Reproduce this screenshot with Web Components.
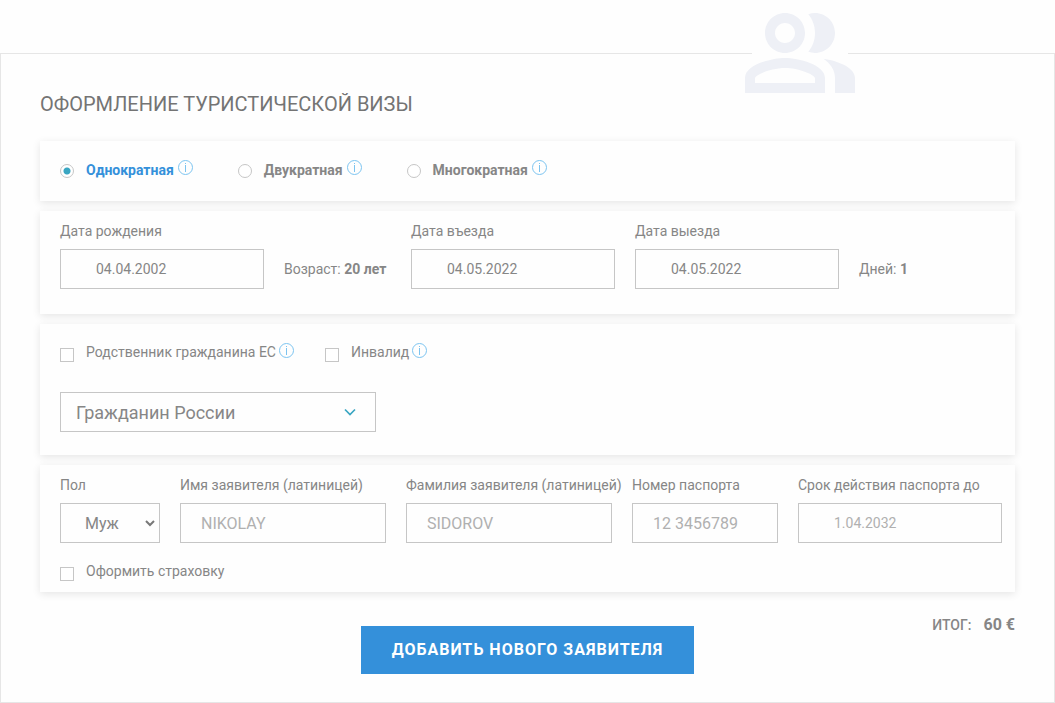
<!DOCTYPE html>
<html lang="ru">
<head>
<meta charset="utf-8">
<title>Оформление туристической визы</title>
<style>
  body {
    margin: 0;
    background: #fefefe;
    color: #868686;
    font: 14px/20px Roboto, "Liberation Sans", sans-serif;
    --line: #c6c6c6;
    --accent: #3490da;
    --teal: #3aa6c2;
    --hint: #b0b0b0;
  }
</style>
</head>
<body>
<visa-panel heading="ОФОРМЛЕНИЕ ТУРИСТИЧЕСКОЙ ВИЗЫ">
  <people-mark slot="mark"></people-mark>
  <form-card class="types"><visa-types></visa-types></form-card>
  <form-card class="dates">
    <field-row>
      <text-field label="Дата рождения" value="04.04.2002" kind="date"></text-field>
      <field-note wide>Возраст: <b>20 лет</b></field-note>
      <text-field label="Дата въезда" value="04.05.2022" kind="date"></text-field>
      <text-field label="Дата выезда" value="04.05.2022" kind="date"></text-field>
      <field-note>Дней: <b>1</b></field-note>
    </field-row>
  </form-card>
  <form-card class="status">
    <check-row>
      <check-field label="Родственник гражданина ЕС" info></check-field>
      <check-field label="Инвалид" info></check-field>
    </check-row>
    <select-field kind="citizen" options="Гражданин России|Гражданин другой страны"></select-field>
  </form-card>
  <form-card class="person">
    <field-row>
      <select-field kind="sex" label="Пол" options="Муж|Жен"></select-field>
      <text-field label="Имя заявителя (латиницей)" placeholder="NIKOLAY"></text-field>
      <text-field label="Фамилия заявителя (латиницей)" placeholder="SIDOROV"></text-field>
      <text-field label="Номер паспорта" placeholder="12 3456789" kind="passport"></text-field>
      <text-field label="Срок действия паспорта до" placeholder="1.04.2032" kind="date"></text-field>
    </field-row>
    <check-row><check-field label="Оформить страховку"></check-field></check-row>
  </form-card>
  <form-footer slot="footer" total="60 €">ДОБАВИТЬ НОВОГО ЗАЯВИТЕЛЯ</form-footer>
</visa-panel>

<script>
class Base extends HTMLElement {
  connectedCallback() {
    if (this.shadowRoot) return;
    this.attachShadow({ mode: "open" }).innerHTML =
      "<style>*{box-sizing:border-box}" + this.css() + "</style>" + this.html();
  }
  attr(name) { return this.getAttribute(name) || ""; }
  css() { return ""; }
  html() { return "<slot></slot>"; }
}

customElements.define("people-mark", class extends Base {
  css() { return `
    :host { display: flex; justify-content: center; width: 96px; background: #fefefe; }
    svg { flex: none; width: 110px; height: 80px; fill: #eef0f6; }`; }
  html() { return `
    <svg viewBox="1 4 22 16" aria-hidden="true">
      <path d="M16.67 13.13C18.04 14.06 19 15.32 19 17v3h4v-3c0-2.18-3.57-3.47-6.33-3.87z"/>
      <path d="M15 12c2.21 0 4-1.79 4-4s-1.79-4-4-4c-.47 0-.91.1-1.33.24C14.5 5.27 15 6.58 15 8s-.5 2.73-1.33 3.76c.42.14.86.24 1.33.24z"/>
      <path d="M9 12c2.21 0 4-1.79 4-4s-1.79-4-4-4-4 1.79-4 4 1.79 4 4 4zm0-6c1.1 0 2 .9 2 2s-.9 2-2 2-2-.9-2-2 .9-2 2-2z"/>
      <path d="M9 13c-2.67 0-8 1.34-8 4v3h16v-3c0-2.66-5.33-4-8-4zm6 5H3v-.99C3.2 16.29 6.3 15 9 15s5.8 1.29 6 2v1z"/>
    </svg>`; }
});

customElements.define("visa-panel", class extends Base {
  css() { return `
    :host { display: block; padding-top: 53px; }
    section { position: relative; border: 1px solid #e6e6e6; padding: 38px 39px 28px; }
    .mark { position: absolute; top: -41px; right: 206px; }
    h1 { margin: 0 0 25px; font-size: 20px; line-height: 24px; font-weight: 400; color: #747474; }
    .cards { display: flex; flex-direction: column; gap: 10px; }`; }
  html() { return `
    <section>
      <div class="mark"><slot name="mark"></slot></div>
      <h1>${this.attr("heading")}</h1>
      <div class="cards"><slot></slot></div>
      <slot name="footer"></slot>
    </section>`; }
});

customElements.define("form-card", class extends Base {
  css() { return `
    :host { display: block; box-sizing: border-box; background: #fefefe;
      box-shadow: 0 2px 8px rgba(0,0,0,.1); }
    :host(.types) { padding: 19px 20px 21px; }
    :host(.dates) { padding: 10px 20px 25px; }
    :host(.status) { padding: 18px 20px 23px; }
    :host(.status) ::slotted(check-row) { margin-bottom: 30px; }
    :host(.person) { padding: 10px 13px 11px 20px; }
    :host(.person) ::slotted(check-row) { margin-top: 18px; }`; }
});

customElements.define("field-row", class extends Base {
  css() { return `:host { display: flex; align-items: flex-end; gap: 20px; }`; }
});

customElements.define("check-row", class extends Base {
  css() { return `:host { display: flex; gap: 31px; }`; }
});

customElements.define("field-note", class extends Base {
  css() { return `
    :host { display: block; line-height: 40px; white-space: nowrap; }
    :host([wide]) { min-width: 107px; }`; }
});

customElements.define("info-tip", class extends Base {
  css() { return `
    :host { display: block; flex: none; }
    svg { display: block; width: 15px; height: 15px; }`; }
  html() { return `
    <svg viewBox="0 0 15 15" role="img" aria-label="Подсказка" fill="none" stroke="#7cc4f0">
      <circle cx="7.5" cy="7.5" r="7"/>
      <path d="M7.5 5v7M7.5 3v1"/>
    </svg>`; }
});

customElements.define("visa-types", class extends Base {
  css() { return `
    :host { display: block; }
    fieldset { display: flex; gap: 45px; margin: 0; padding: 0; border: 0; }
    label { display: flex; height: 20px; font-weight: 700; }
    input { appearance: none; align-self: flex-end; width: 14px; height: 14px; margin: 0 12px 2px 0;
      border: 1px solid var(--line); border-radius: 50%; background: #fff; }
    input:checked { background: radial-gradient(circle, var(--teal) 3px, #fff 4px); }
    input:checked + span { color: var(--accent); }
    span { margin-right: 4px; }`; }
  html() {
    return "<fieldset aria-label='Кратность визы'>" +
      ["Однократная", "Двукратная", "Многократная"].map((t, i) =>
        `<label><input type="radio" name="type" ${i ? "" : "checked"}><span>${t}</span><info-tip></info-tip></label>`
      ).join("") + "</fieldset>";
  }
});

customElements.define("check-field", class extends Base {
  css() { return `
    :host { display: block; }
    label { display: flex; height: 20px; white-space: nowrap; }
    input { appearance: none; align-self: flex-end; width: 14px; height: 14px; margin: 0 12px 0 0;
      border: 1px solid var(--line); background: #fff; }
    input:checked { background: var(--teal); }
    info-tip { margin: 1px 0 0 3px; }`; }
  html() { return `
    <label><input type="checkbox"><span>${this.attr("label")}</span>${this.hasAttribute("info") ? "<info-tip></info-tip>" : ""}</label>`; }
});

customElements.define("text-field", class extends Base {
  css() { return `
    :host { display: block; width: 206px; }
    :host([kind=date]) { width: 204px; }
    :host([kind=passport]) { width: 146px; }
    label { display: block; margin-bottom: 8px; white-space: nowrap; }
    input { display: block; width: 100%; height: 40px; margin: 0; padding: 0 20px;
      border: 1px solid var(--line); border-radius: 0; background: #fefefe; color: inherit;
      font: inherit; font-size: 16px; outline: 0; }
    :host([kind=date]) input { padding: 0 35px; font-size: 14px; }
    input::placeholder { color: var(--hint); opacity: 1; }`; }
  html() { return `
    <label for="f">${this.attr("label")}</label>
    <input id="f" type="text" value="${this.attr("value")}" placeholder="${this.attr("placeholder")}">`; }
});

customElements.define("select-field", class extends Base {
  css() { return `
    :host { display: block; width: 316px; }
    :host([kind=sex]) { width: 100px; }
    label { display: block; margin-bottom: 8px; }
    .box { display: grid; align-items: center; }
    select { grid-area: 1 / 1; appearance: none; width: 100%; height: 40px; margin: 0; padding: 2px 15px 0;
      border: 1px solid var(--line); border-radius: 0; background: #fefefe; color: inherit;
      font: inherit; font-size: 18px; outline: 0; }
    svg { grid-area: 1 / 1; justify-self: end; width: 12px; height: 8px; margin-right: 20px;
      pointer-events: none; fill: none; stroke: var(--teal); stroke-width: 1.7; }
    :host([kind=sex]) select { padding: 2px 24px 0; font-size: 16px; }
    :host([kind=sex]) svg { width: 10px; margin-right: 5px; stroke: #787878; stroke-width: 2; }`; }
  html() {
    const sex = this.attr("kind") === "sex";
    return (sex ? `<label for="s">${this.attr("label")}</label>` : "") + `
      <div class="box">
        <select id="s" ${sex ? "" : 'aria-label="Гражданство"'}>${this.attr("options").split("|").map(o => `<option>${o}</option>`).join("")}</select>
        ${sex ? '<svg viewBox="0 0 10 8"><path d="M1 2l4 4 4-4"/></svg>'
              : '<svg viewBox="0 0 12 8"><path d="M1 1.5l5 5 5-5"/></svg>'}
      </div>`;
  }
});

customElements.define("form-footer", class extends Base {
  css() { return `
    :host { display: grid; grid-template-columns: 1fr auto 1fr; align-items: start; margin-top: 23px; }
    button { grid-column: 2; margin: 11px 0 0; padding: 0 31px; height: 48px; border: 0; border-radius: 0;
      background: var(--accent); color: #fff; font: inherit; font-size: 16px; font-weight: 700;
      letter-spacing: 1px; white-space: nowrap; cursor: pointer; }
    p { display: flex; align-items: baseline; justify-content: flex-end; gap: 12px; margin: 0; font-weight: 500; }
    b { font-size: 16px; }`; }
  html() { return `
    <button type="button"><slot></slot></button>
    <p><span>ИТОГ:</span><b>${this.attr("total")}</b></p>`; }
});
</script>
</body>
</html>
